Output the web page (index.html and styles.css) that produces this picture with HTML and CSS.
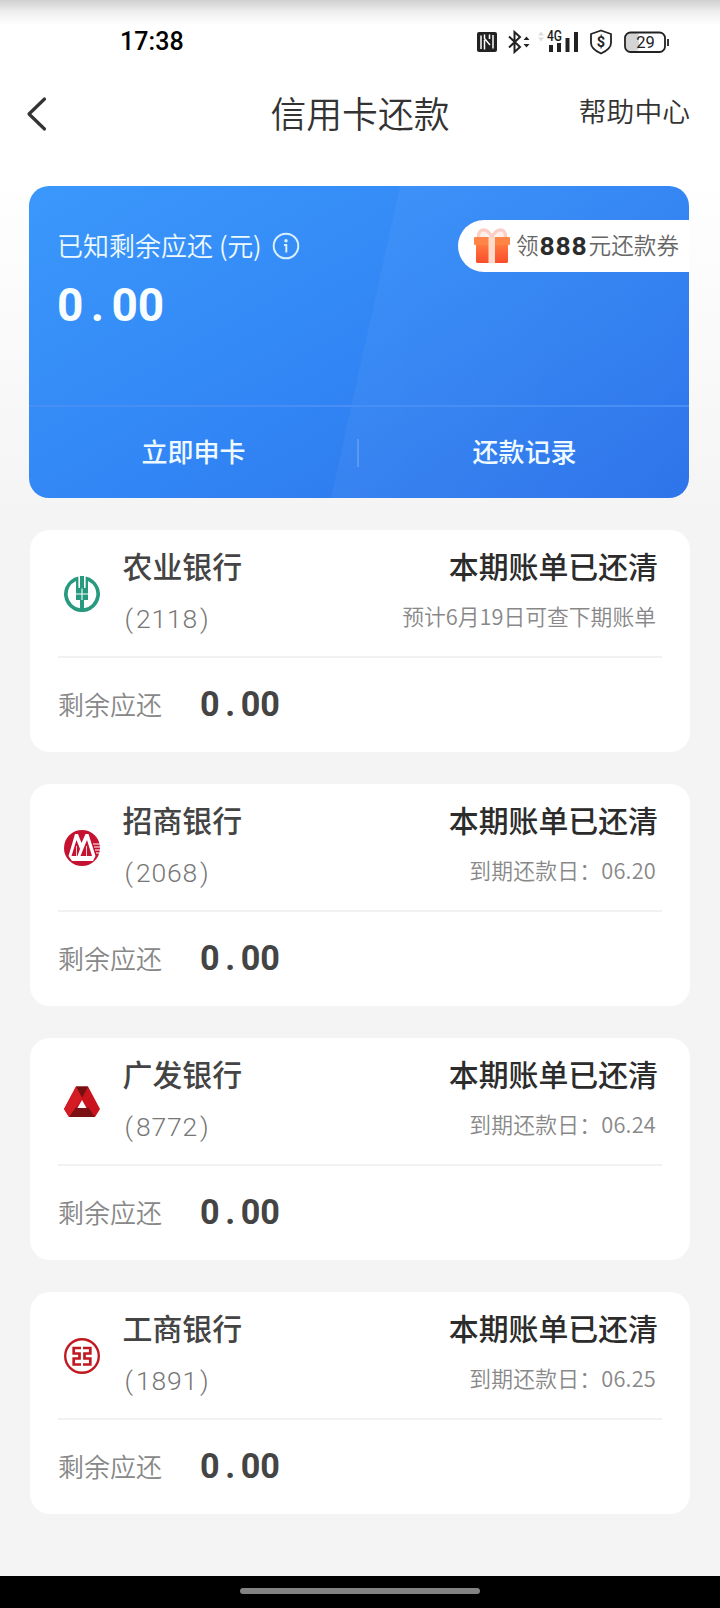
FILE: index.html
```html
<!DOCTYPE html>
<html lang="zh-CN">
<head>
<meta charset="utf-8">
<title>信用卡还款</title>
<link rel="stylesheet" href="styles.css">
</head>
<body>
<div class="status">
  <span class="time">17:38</span>
  <svg class="status-icons" width="200" height="32" viewBox="0 0 200 32">
    <rect x="2" y="6" width="20" height="20" rx="2" fill="#222"/>
    <path d="M6 23V9.500M18 9V22.500M9.500 8.500V12.500L15 19M9.500 14V23.500M14.500 8.500V13" fill="none" stroke="#fff" stroke-width="1.500"/>
    <path d="M34 10.500L45 21L39.500 26V6L45 11L34 21.500" fill="none" stroke="#222" stroke-width="2"/>
    <path d="M48.500 14L51.500 10.500L54.500 14ZM48.500 18L51.500 21.500L54.500 18Z" fill="#222"/>
    <path d="M63 9.500L66 5.500L69 9.500ZM63 11.500L66 15.500L69 11.500Z" fill="#ddd"/>
    <text x="72" y="14.500" font-size="14" class="net thin" textLength="15" lengthAdjust="spacingAndGlyphs">4G</text>
    <path d="M76 19V26M84 17V26M92.500 12V26M101 6V26" stroke="#222" stroke-width="4" fill="none"/>
    <path d="M126 4.500L136 8V17Q136 23 126 27.500Q116 23 116 17V8Z" fill="none" stroke="#222" stroke-width="1.800" stroke-linejoin="round"/>
    <text x="126" y="21" font-size="14.500" text-anchor="middle" class="net">$</text>
    <rect x="151" y="7" width="13" height="18" rx="4" fill="#d4d4d4"/>
    <rect x="150" y="6.500" width="40" height="19.500" rx="5.500" fill="none" stroke="#222" stroke-width="1.800"/>
    <path d="M193 13V20" stroke="#222" stroke-width="1.800"/>
    <text x="170.500" y="21.500" font-size="16.500" text-anchor="middle" class="bat">29</text>
  </svg>
</div>
<header class="nav">
  <svg class="back" width="24" height="36" viewBox="0 0 24 36"><path d="M18.500 3L3 18L18.500 33" fill="none" stroke="#333" stroke-width="3.200" stroke-linecap="round" stroke-linejoin="round"/></svg>
  <h1>信用卡还款</h1>
  <a class="help">帮助中心</a>
</header>
<main>
  <section class="hero">
    <div class="hero-top">
      <div>
        <div class="hero-label"><span>已知剩余应还</span><span class="unit">(元)</span>
          <svg width="28" height="28" viewBox="0 0 28 28"><circle cx="14" cy="14" r="12.300" fill="none" stroke="#d9f0ff" stroke-width="2"/><circle cx="14" cy="8.800" r="1.700" fill="#d9f0ff"/><path d="M12 13H14.300V20.500" fill="none" stroke="#d9f0ff" stroke-width="2"/></svg>
        </div>
        <div class="amount big">0<i>.</i>00</div>
      </div>
      <div class="coupon">
        <svg width="36" height="36" viewBox="0 0 36 36">
          <defs><linearGradient id="g" x2="0" y2="1"><stop stop-color="#ff7c40"/><stop offset="1" stop-color="#fb4e2c"/></linearGradient></defs>
          <path d="M18 9C13 -1 4 0 4.500 9M18 9C23 -1 32 0 31.500 9" fill="#fff0ec" stroke="#fbcfc5" stroke-width="3.200"/>
          <rect x="2" y="15" width="32" height="20" rx="1.500" fill="url(#g)"/>
          <rect x="0" y="9" width="36" height="8" rx="1" fill="#ff8546"/>
          <rect x="14.500" y="9" width="6.500" height="26" fill="#ffd9ca"/>
        </svg>
        <span>领</span><b>888</b><span>元还款券</span>
      </div>
    </div>
    <div class="tabs"><a>立即申卡</a><a>还款记录</a></div>
  </section>

  <section class="card">
    <div class="card-head">
      <svg class="logo" width="36" height="36" viewBox="0 0 36 36" fill="#27997f">
        <path d="M14.500 .4A18 18 0 1 0 21.500 .4V12H24V4.900A14.400 14.400 0 0 1 20 32.200V24H24V12H12V24H16V32.200A14.400 14.400 0 0 1 12 4.900V12H14.500Z"/>
        <rect x="16" y="0" width="4" height="13"/>
        <path d="M18 12.500V24M12 18H24M15.300 0V10.500M20.700 0V10.500" stroke="#fff" stroke-width="1.100"/>
      </svg>
      <div class="bank"><h2>农业银行</h2><p><i>(</i>2118<i>)</i></p></div>
      <div class="state"><h3>本期账单已还清</h3><p>预计6月19日可查下期账单</p></div>
    </div>
    <div class="due"><span>剩余应还</span><div class="amount">0<i>.</i>00</div></div>
  </section>

  <section class="card">
    <div class="card-head">
      <svg class="logo" width="36" height="36" viewBox="0 0 36 36">
        <circle cx="18" cy="18" r="18" fill="#c51230"/>
        <path d="M4.500 26L11 4H14L17.500 13L21.500 4H24.500L31.500 26L29 31H8Z" fill="#fff"/>
        <path d="M12.500 10L16 19L13.500 26H7.500ZM23 10L28 26H16.500Z" fill="#c51230"/>
        <path d="M12.500 16V26M22.500 16V26" stroke="#fff" stroke-width=".8"/>
        <path d="M29 14H36M30 17H36M31 20H36M32 23H36" stroke="#fff" stroke-width="1.200"/>
      </svg>
      <div class="bank"><h2>招商银行</h2><p><i>(</i>2068<i>)</i></p></div>
      <div class="state"><h3>本期账单已还清</h3><p class="date">到期还款日：06.20</p></div>
    </div>
    <div class="due"><span>剩余应还</span><div class="amount">0<i>.</i>00</div></div>
  </section>

  <section class="card">
    <div class="card-head">
      <svg class="logo" width="36" height="36" viewBox="0 0 36 36">
        <path d="M12 2.500H24L36 25L31 33H5L0 25Z" fill="#c9141e"/>
        <path d="M12 2.500H24L18 14Z" fill="#74100f"/>
        <path d="M11.500 23.500H24.500L31 33H5Z" fill="#7c1113"/>
        <path d="M12 2.500L18 14L11.500 23.500L5 33L0 25Z" fill="#d41c25"/>
        <path d="M18 16L22.500 24H13.500Z" fill="#fff"/>
      </svg>
      <div class="bank"><h2>广发银行</h2><p><i>(</i>8772<i>)</i></p></div>
      <div class="state"><h3>本期账单已还清</h3><p class="date">到期还款日：06.24</p></div>
    </div>
    <div class="due"><span>剩余应还</span><div class="amount">0<i>.</i>00</div></div>
  </section>

  <section class="card">
    <div class="card-head">
      <svg class="logo" width="36" height="36" viewBox="0 0 36 36" fill="none" stroke="#c01920">
        <circle cx="18" cy="18" r="16.800" stroke-width="2.400"/>
        <path d="M17 10H9.700V15.500H15.500V20.500H8.400M17 26.500H9.700V20.500M19 10H26.300V15.500H20.500V20.500H26.300V26.500H19" stroke-width="2.700"/>
      </svg>
      <div class="bank"><h2>工商银行</h2><p><i>(</i>1891<i>)</i></p></div>
      <div class="state"><h3>本期账单已还清</h3><p class="date">到期还款日：06.25</p></div>
    </div>
    <div class="due"><span>剩余应还</span><div class="amount">0<i>.</i>00</div></div>
  </section>
</main>
<footer class="home"><span></span></footer>
</body>
</html>
```
FILE: styles.css
```css
* { box-sizing: border-box; margin: 0; padding: 0; }
body {
  width: 720px; height: 1608px; overflow: hidden;
  display: flex; flex-direction: column;
  font-family: "Noto Sans CJK SC", sans-serif; font-weight: 400; color: #333;
  background: linear-gradient(#fff 0, #fff 170px, #f4f4f4 520px);
}
.status {
  height: 72px; padding: 0 45px 0 120px; flex: none;
  display: flex; justify-content: space-between;
  background: linear-gradient(#d0d0d0, #efefef 12px, #fff 25px);
}
.time { font: 500 25px/84px Roboto, sans-serif; color: #000; letter-spacing: .1px; }
.status-icons { margin-top: 26px; }
.net { font-family: Roboto, sans-serif; font-weight: 700; fill: #222; }
.thin { font-weight: 500; }
.bat { font-family: Roboto, sans-serif; fill: #222; }
.nav {
  height: 114px; flex: none; padding: 0 30px 0 26px;
  display: grid; grid-template-columns: 1fr auto 1fr;
}
.back { margin-top: 24px; }
h1 { font-size: 35.8px; font-weight: 350; line-height: 80px; padding-left: 4px; }
.help { justify-self: end; font-size: 27.8px; font-weight: 350; line-height: 76px; }
main { flex: 1; padding: 0 30px; }
.hero {
  height: 312px; margin: 0 1px 32px -1px; border-radius: 20px; overflow: hidden; color: #eefaff;
  display: flex; flex-direction: column;
  background:
    linear-gradient(102.5deg, transparent 50.8%, rgba(255,255,255,.04) 51%, rgba(255,255,255,.015) 100%),
    linear-gradient(150deg, #3b98fb 0, #3286f5 50%, #2b72ea 100%);
}
.hero-top { height: 219px; padding: 34px 0 0 28px; display: flex; justify-content: space-between; }
.hero-label { height: 52px; display: flex; align-items: center; font-size: 26px; font-weight: 350; }
.hero-label span { line-height: 40px; padding-bottom: 3px; }
.unit { margin: 0 11px 0 6px; letter-spacing: -.3px; }
.amount { font: 700 34.2px/44px Roboto, sans-serif; color: #444; display: flex; }
.amount i { font-style: normal; width: 21px; text-align: center; }
.amount.big { font-size: 46px; line-height: 66px; color: #f8fdff; }
.big i { width: 28px; }
.coupon {
  width: 231px; height: 52px; padding-left: 16px; border-radius: 26px 0 0 26px; background: #fff;
  display: flex; align-items: center; color: #666; font-size: 22.6px; font-weight: 350; white-space: nowrap;
}
.coupon svg { margin-right: 6px; flex: none; }
.coupon span { padding-bottom: 3px; }
.coupon b { font: 700 26.5px/52px Roboto, sans-serif; color: #2c2c2c; letter-spacing: .8px; margin: 0 1px; }
.tabs { height: 93px; display: grid; grid-template-columns: 1fr 1fr; border-top: 2px solid #478ff5; align-items: center; }
.tabs a { font-size: 26px; font-weight: 500; text-align: center; height: 28px; line-height: 24px; padding-left: 1px; }
.tabs a:first-child { border-right: 2px solid #5999f4; }
.card { height: 222px; margin-bottom: 32px; padding: 0 28px; border-radius: 20px; background: #fff; }
.card-head { height: 128px; border-bottom: 2px solid #f1f1f1; display: flex; }
.logo { margin: 46px 22.5px 0 6px; flex: none; }
h2, h3 { font-size: 29.9px; font-weight: 500; line-height: 44px; }
h2 { color: #444; }
h3 { color: #2c2c2c; }
.bank, .state { padding-top: 13px; }
.bank p { font: 300 26.5px/63px Roboto, sans-serif; color: #777; letter-spacing: .8px; display: flex; }
.bank i { font-style: normal; width: 13.5px; text-align: center; }
.state { margin-left: auto; margin-right: 4px; text-align: right; }
.state p { font-size: 21.8px; font-weight: 350; line-height: 57px; color: #888; padding-right: 2px; }
.state .date { letter-spacing: .2px; }
.due { height: 92px; display: flex; align-items: center; }
.due span { font-size: 26px; font-weight: 350; color: #888; width: 142px; padding-bottom: 2px; }
.home { height: 32px; flex: none; background: #000; display: flex; justify-content: center; padding-top: 12px; }
.home span { width: 240px; height: 6px; border-radius: 3px; background: #838383; }
```
